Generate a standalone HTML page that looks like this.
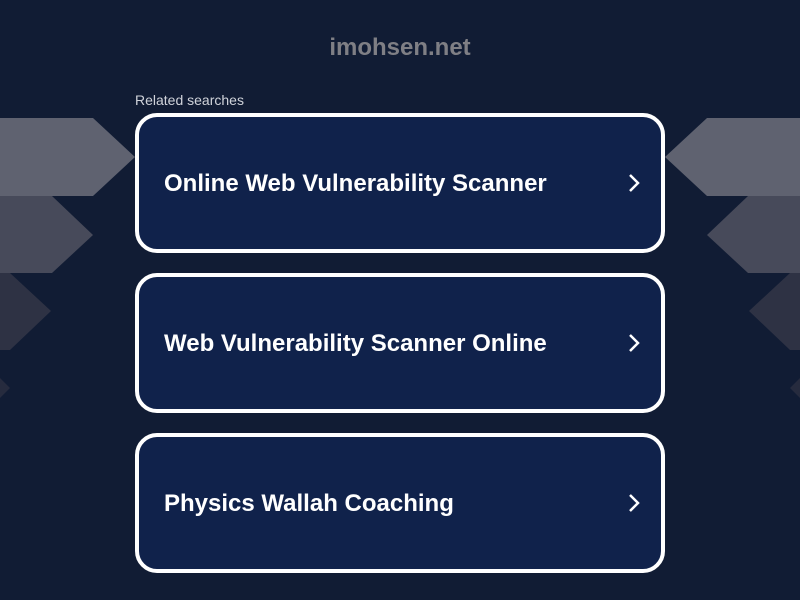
<!DOCTYPE html>
<html><head><style>
body{margin:0;width:800px;height:600px;background:#111c34;font-family:"Liberation Sans",sans-serif;position:relative;overflow:hidden}
svg.bg{position:absolute;left:0;top:0}
.t{position:absolute;top:34px;left:0;width:800px;text-align:center;color:#7f7f85;font-weight:bold;font-size:24px}
.r{position:absolute;left:135px;top:92px;color:#d0d3da;font-size:14px}
.c{position:absolute;left:135px;width:522px;height:132px;border:4px solid #fff;border-radius:22px;background:#10224b;color:#fff;font-weight:bold;font-size:24px;box-sizing:content-box}
.c span{position:absolute;left:25px;top:53px}
.c svg{position:absolute;left:487px;top:54px}
</style></head><body>
<svg class="bg" width="800" height="600">
<polygon points="0,118 93,118 135,157 93,196 0,196" fill="#5f6270"/>
<polygon points="0,196 52,196 93,235 52,273 0,273" fill="#474a5a"/>
<polygon points="0,273 10,273 51,311 10,350 0,350" fill="#2e3244"/>
<polygon points="0,378 10,388 0,398" fill="#262b3e"/>
<polygon points="800,118 707,118 665,157 707,196 800,196" fill="#5f6270"/>
<polygon points="800,196 748,196 707,235 748,273 800,273" fill="#474a5a"/>
<polygon points="800,273 790,273 749,311 790,350 800,350" fill="#2e3244"/>
<polygon points="800,378 790,388 800,398" fill="#262b3e"/>
</svg>
<div class="t">imohsen.net</div>
<div class="r">Related searches</div>
<div class="c" style="top:113px"><span>Online Web Vulnerability Scanner</span><svg width="16" height="24"><path d="M4 4l8 8-8 8" stroke="#fff" stroke-width="2.5" fill="none"/></svg></div>
<div class="c" style="top:273px"><span>Web Vulnerability Scanner Online</span><svg width="16" height="24"><path d="M4 4l8 8-8 8" stroke="#fff" stroke-width="2.5" fill="none"/></svg></div>
<div class="c" style="top:433px"><span>Physics Wallah Coaching</span><svg width="16" height="24"><path d="M4 4l8 8-8 8" stroke="#fff" stroke-width="2.5" fill="none"/></svg></div>
</body></html>
